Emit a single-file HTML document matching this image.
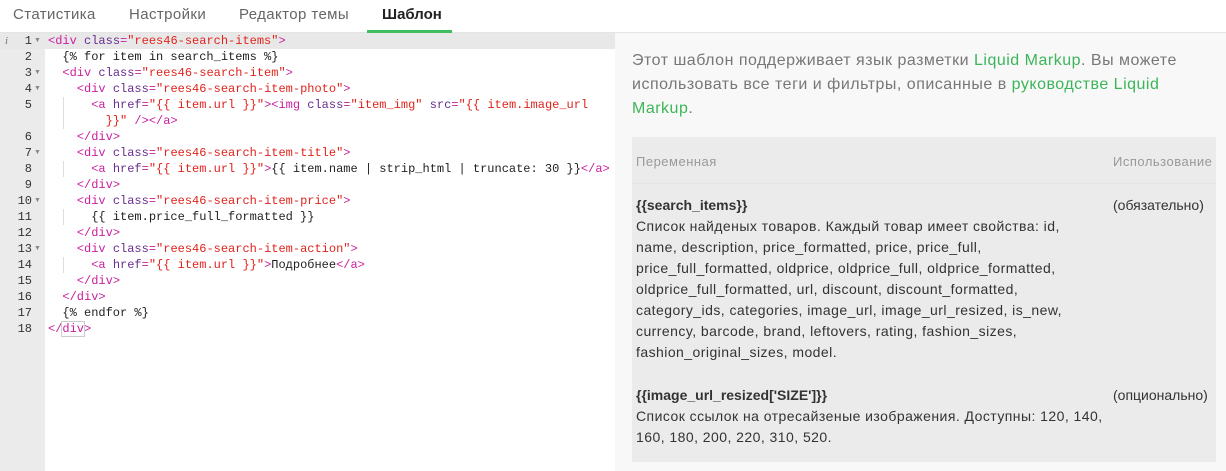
<!DOCTYPE html>
<html><head><meta charset="utf-8"><style>
*{margin:0;padding:0;box-sizing:border-box}
body{width:1226px;height:471px;overflow:hidden;background:#f8f8f8;font-family:"Liberation Sans",sans-serif;position:relative}
.tabs{position:absolute;left:0;top:0;width:1226px;height:33px;background:#fff;border-bottom:1px solid #e4e4e4}
.tab{position:absolute;top:6px;font-size:15px;color:#666;letter-spacing:0.4px}
.tab.a{color:#222;font-weight:bold;letter-spacing:0}
.ul{position:absolute;left:367px;top:30px;width:85px;height:3px;background:#3fbd5f}
.gut{position:absolute;left:0;top:33px;width:45px;height:438px;background:#ebebeb}
.code{position:absolute;left:45px;top:33px;width:570px;height:438px;background:#fff}
.hl{position:absolute;left:0;top:33px;width:615px;height:16px;background:#e8e8e8}
.ln{position:absolute;left:0;width:32px;text-align:right;font:12px/16px "Liberation Mono",monospace;color:#333}
.fd{position:absolute;left:34px;font-size:7px;color:#888;line-height:16px}
.cl{position:absolute;left:48px;font:12px/16px "Liberation Mono",monospace;color:#222;white-space:pre}
.t{color:#c8209e}.at{color:#6a2c91}.s{color:#e0241c}
.g{position:absolute;left:63px;width:1px;background:#ddd}
.txt{position:absolute;left:632px;top:49px;font-size:16px;line-height:24px;color:#777;width:590px;letter-spacing:0.5px}
.lk{color:#3cb55a}
.box{position:absolute;left:632px;top:137px;width:584px;height:325px;background:#ebebeb;font-size:14px;line-height:21px;color:#333;letter-spacing:0.45px}
.hd{position:absolute;top:14px;font-size:13px;color:#999;letter-spacing:0.5px}
.sep{position:absolute;left:0;top:46px;width:584px;height:1px;background:#e2e4e6}
b{font-weight:bold;letter-spacing:0}
</style></head><body>
<div class="tabs">
<span class="tab" style="left:13px">Статистика</span>
<span class="tab" style="left:129px">Настройки</span>
<span class="tab" style="left:239px">Редактор темы</span>
<span class="tab a" style="left:382px">Шаблон</span>
<div class="ul"></div>
</div>
<div class="gut"></div>
<div class="code"></div>
<div class="hl"></div>
<span style="position:absolute;left:5px;top:33px;font:italic 11px/16px 'Liberation Serif',serif;color:#777">i</span>
<div class="g" style="top:97px;height:32px"></div>
<div class="g" style="top:161px;height:16px"></div>
<div class="g" style="top:209px;height:16px"></div>
<div class="g" style="top:257px;height:16px"></div>
<div class="ln" style="top:33px">1</div><div class="fd" style="top:33px">▼</div>
<div class="ln" style="top:49px">2</div>
<div class="ln" style="top:65px">3</div><div class="fd" style="top:65px">▼</div>
<div class="ln" style="top:81px">4</div><div class="fd" style="top:81px">▼</div>
<div class="ln" style="top:97px">5</div>
<div class="ln" style="top:129px">6</div>
<div class="ln" style="top:145px">7</div><div class="fd" style="top:145px">▼</div>
<div class="ln" style="top:161px">8</div>
<div class="ln" style="top:177px">9</div>
<div class="ln" style="top:193px">10</div><div class="fd" style="top:193px">▼</div>
<div class="ln" style="top:209px">11</div>
<div class="ln" style="top:225px">12</div>
<div class="ln" style="top:241px">13</div><div class="fd" style="top:241px">▼</div>
<div class="ln" style="top:257px">14</div>
<div class="ln" style="top:273px">15</div>
<div class="ln" style="top:289px">16</div>
<div class="ln" style="top:305px">17</div>
<div class="ln" style="top:321px">18</div>
<div class="cl" style="top:33px"><span class="t">&lt;div</span> <span class="at">class</span><span class="t">=</span><span class="s">"rees46-search-items"</span><span class="t">&gt;</span></div>
<div class="cl" style="top:49px">  {% for item in search_items %}</div>
<div class="cl" style="top:65px">  <span class="t">&lt;div</span> <span class="at">class</span><span class="t">=</span><span class="s">"rees46-search-item"</span><span class="t">&gt;</span></div>
<div class="cl" style="top:81px">    <span class="t">&lt;div</span> <span class="at">class</span><span class="t">=</span><span class="s">"rees46-search-item-photo"</span><span class="t">&gt;</span></div>
<div class="cl" style="top:97px">      <span class="t">&lt;a</span> <span class="at">href</span><span class="t">=</span><span class="s">"{{ item.url }}"</span><span class="t">&gt;&lt;img</span> <span class="at">class</span><span class="t">=</span><span class="s">"item_img"</span> <span class="at">src</span><span class="t">=</span><span class="s">"{{ item.image_url</span></div>
<div class="cl" style="top:113px">        <span class="s">}}"</span> <span class="t">/&gt;&lt;/a&gt;</span></div>
<div class="cl" style="top:129px">    <span class="t">&lt;/div&gt;</span></div>
<div class="cl" style="top:145px">    <span class="t">&lt;div</span> <span class="at">class</span><span class="t">=</span><span class="s">"rees46-search-item-title"</span><span class="t">&gt;</span></div>
<div class="cl" style="top:161px">      <span class="t">&lt;a</span> <span class="at">href</span><span class="t">=</span><span class="s">"{{ item.url }}"</span><span class="t">&gt;</span>{{ item.name | strip_html | truncate: 30 }}<span class="t">&lt;/a&gt;</span></div>
<div class="cl" style="top:177px">    <span class="t">&lt;/div&gt;</span></div>
<div class="cl" style="top:193px">    <span class="t">&lt;div</span> <span class="at">class</span><span class="t">=</span><span class="s">"rees46-search-item-price"</span><span class="t">&gt;</span></div>
<div class="cl" style="top:209px">      {{ item.price_full_formatted }}</div>
<div class="cl" style="top:225px">    <span class="t">&lt;/div&gt;</span></div>
<div class="cl" style="top:241px">    <span class="t">&lt;div</span> <span class="at">class</span><span class="t">=</span><span class="s">"rees46-search-item-action"</span><span class="t">&gt;</span></div>
<div class="cl" style="top:257px">      <span class="t">&lt;a</span> <span class="at">href</span><span class="t">=</span><span class="s">"{{ item.url }}"</span><span class="t">&gt;</span>Подробнее<span class="t">&lt;/a&gt;</span></div>
<div class="cl" style="top:273px">    <span class="t">&lt;/div&gt;</span></div>
<div class="cl" style="top:289px">  <span class="t">&lt;/div&gt;</span></div>
<div class="cl" style="top:305px">  {% endfor %}</div>
<div class="cl" style="top:321px"><span class="t">&lt;/<span style="outline:1px solid #ccc">div</span>&gt;</span></div>
<div class="txt">Этот шаблон поддерживает язык разметки <span class="lk">Liquid Markup</span>. Вы можете<br>использовать все теги и фильтры, описанные в <span class="lk">руководстве Liquid</span><br><span class="lk">Markup</span>.</div>
<div class="box">
<span class="hd" style="left:4px">Переменная</span>
<span class="hd" style="left:481px">Использование</span>
<div class="sep"></div>
<div style="position:absolute;left:4px;top:58px;width:475px"><b>{{search_items}}</b><br>Список найденых товаров. Каждый товар имеет свойства: id,<br>name, description, price_formatted, price, price_full,<br>price_full_formatted, oldprice, oldprice_full, oldprice_formatted,<br>oldprice_full_formatted, url, discount, discount_formatted,<br>category_ids, categories, image_url, image_url_resized, is_new,<br>currency, barcode, brand, leftovers, rating, fashion_sizes,<br>fashion_original_sizes, model.</div>
<div style="position:absolute;left:481px;top:58px;letter-spacing:0">(обязательно)</div>
<div style="position:absolute;left:4px;top:248px;width:475px"><b>{{image_url_resized['SIZE']}}</b><br>Список ссылок на отресайзеные изображения. Доступны: 120, 140,<br>160, 180, 200, 220, 310, 520.</div>
<div style="position:absolute;left:481px;top:248px;letter-spacing:0">(опционально)</div>
</div>
</body></html>
